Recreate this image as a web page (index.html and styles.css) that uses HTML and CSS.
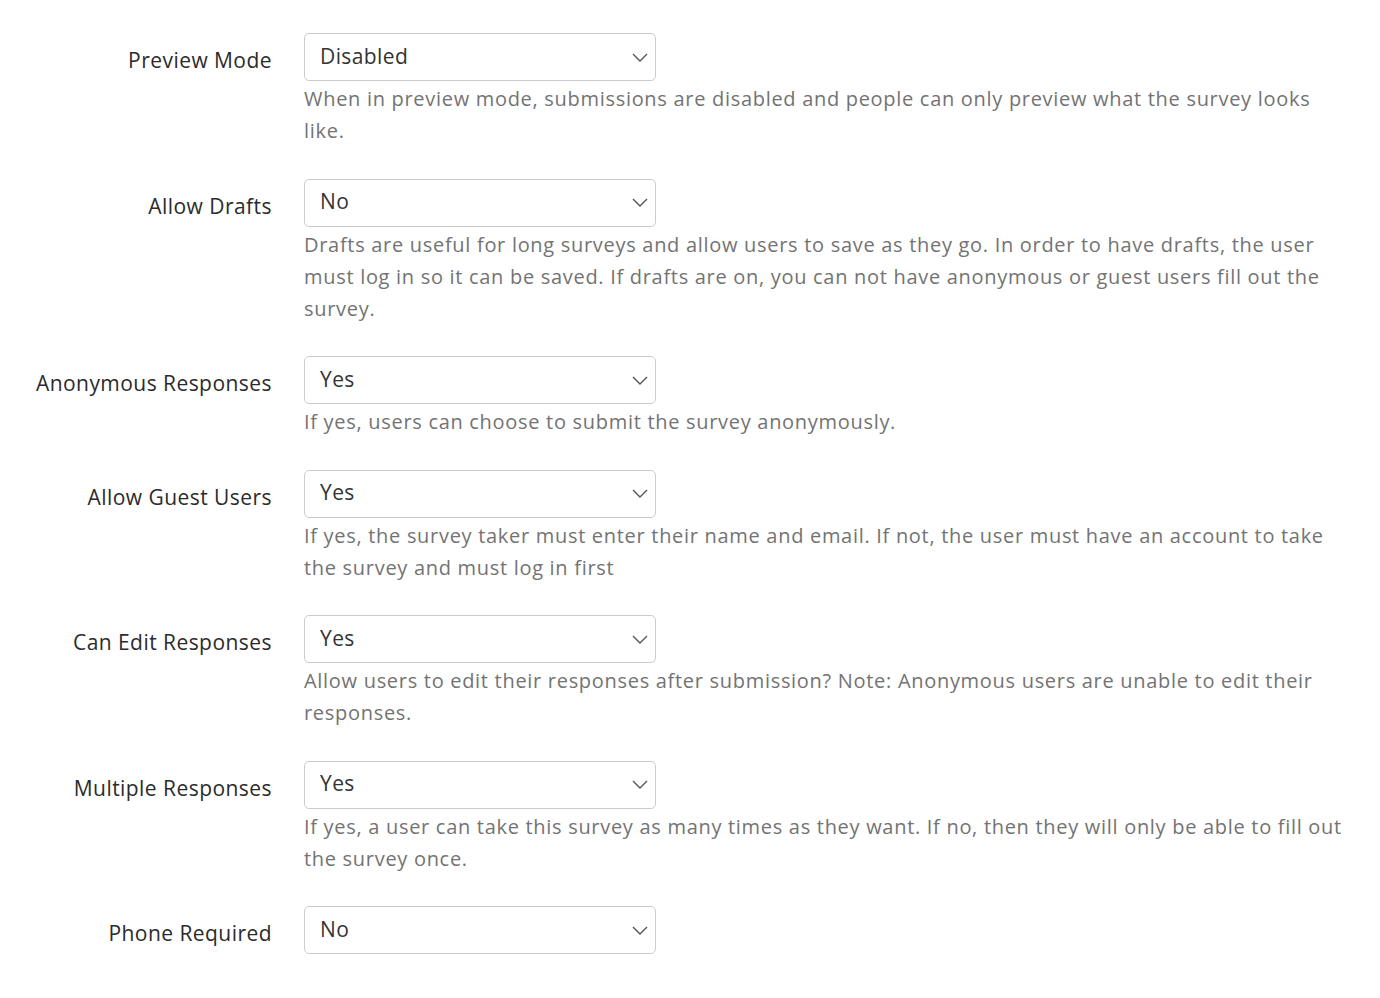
FILE: index.html
```html
<!DOCTYPE html>
<html lang="en">
<head>
<meta charset="utf-8">
<title>Survey Settings</title>
<link rel="stylesheet" href="styles.css">
</head>
<body>
<div class="settings">
  <div class="row">
    <label class="label">Preview Mode</label>
    <div class="field">
      <div class="select"><span class="value">Disabled</span><svg class="chev" viewBox="0 0 16 9" width="16" height="9"><path d="M1 1l7 7 7-7" fill="none" stroke="#555" stroke-width="1.4"/></svg></div>
      <p class="help">When in preview mode, submissions are disabled and people can only preview what the survey looks like.</p>
    </div>
  </div>
  <div class="row">
    <label class="label">Allow Drafts</label>
    <div class="field">
      <div class="select"><span class="value">No</span><svg class="chev" viewBox="0 0 16 9" width="16" height="9"><path d="M1 1l7 7 7-7" fill="none" stroke="#555" stroke-width="1.4"/></svg></div>
      <p class="help">Drafts are useful for long surveys and allow users to save as they go. In order to have drafts, the user must log in so it can be saved. If drafts are on, you can not have anonymous or guest users fill out the survey.</p>
    </div>
  </div>
  <div class="row">
    <label class="label">Anonymous Responses</label>
    <div class="field">
      <div class="select"><span class="value">Yes</span><svg class="chev" viewBox="0 0 16 9" width="16" height="9"><path d="M1 1l7 7 7-7" fill="none" stroke="#555" stroke-width="1.4"/></svg></div>
      <p class="help">If yes, users can choose to submit the survey anonymously.</p>
    </div>
  </div>
  <div class="row">
    <label class="label">Allow Guest Users</label>
    <div class="field">
      <div class="select"><span class="value">Yes</span><svg class="chev" viewBox="0 0 16 9" width="16" height="9"><path d="M1 1l7 7 7-7" fill="none" stroke="#555" stroke-width="1.4"/></svg></div>
      <p class="help">If yes, the survey taker must enter their name and email. If not, the user must have an account to take the survey and must log in first</p>
    </div>
  </div>
  <div class="row">
    <label class="label">Can Edit Responses</label>
    <div class="field">
      <div class="select"><span class="value">Yes</span><svg class="chev" viewBox="0 0 16 9" width="16" height="9"><path d="M1 1l7 7 7-7" fill="none" stroke="#555" stroke-width="1.4"/></svg></div>
      <p class="help">Allow users to edit their responses after submission? Note: Anonymous users are unable to edit their responses.</p>
    </div>
  </div>
  <div class="row">
    <label class="label">Multiple Responses</label>
    <div class="field">
      <div class="select"><span class="value">Yes</span><svg class="chev" viewBox="0 0 16 9" width="16" height="9"><path d="M1 1l7 7 7-7" fill="none" stroke="#555" stroke-width="1.4"/></svg></div>
      <p class="help">If yes, a user can take this survey as many times as they want. If no, then they will only be able to fill out the survey once.</p>
    </div>
  </div>
  <div class="row last">
    <label class="label">Phone Required</label>
    <div class="field">
      <div class="select"><span class="value">No</span><svg class="chev" viewBox="0 0 16 9" width="16" height="9"><path d="M1 1l7 7 7-7" fill="none" stroke="#555" stroke-width="1.4"/></svg></div>
    </div>
  </div>
</div>
<div class="divider"></div>
</body>
</html>
```

FILE: styles.css
```css
* { box-sizing: border-box; }
html, body { margin: 0; padding: 0; background: #fff; }
body {
  font-family: "Open Sans", "Noto Sans", sans-serif;
  color: #333;
}
.settings {
  margin: 0 34px 0 16px;
  padding-top: 33px;
}
.divider {
  margin: 42px 40px 0 16px;
  border-top: 2px solid #ededed;
}
.row {
  display: flex;
  align-items: flex-start;
  margin-bottom: 31px;
}
.row.last { margin-bottom: 0; }
.label {
  flex: 0 0 288px;
  padding-right: 32px;
  text-align: right;
  font-size: 21px;
  letter-spacing: 0.45px;
  line-height: 48px;
  color: #2b2b2b;
  padding-top: 3px;
}
.field { flex: 1; min-width: 0; }
.select {
  width: 352px;
  height: 48px;
  border: 1px solid #ccc;
  border-radius: 5px;
  display: flex;
  align-items: center;
  justify-content: space-between;
  padding: 0 7px 0 15px;
  font-size: 21px;
  letter-spacing: 0.4px;
  color: #333;
}
.value { padding-bottom: 3px; }
.chev { display: block; }
.help {
  margin: 0;
  padding-top: 2px;
  font-size: 20px;
  letter-spacing: 0.7px;
  line-height: 32.25px;
  color: #737373;
}
```
